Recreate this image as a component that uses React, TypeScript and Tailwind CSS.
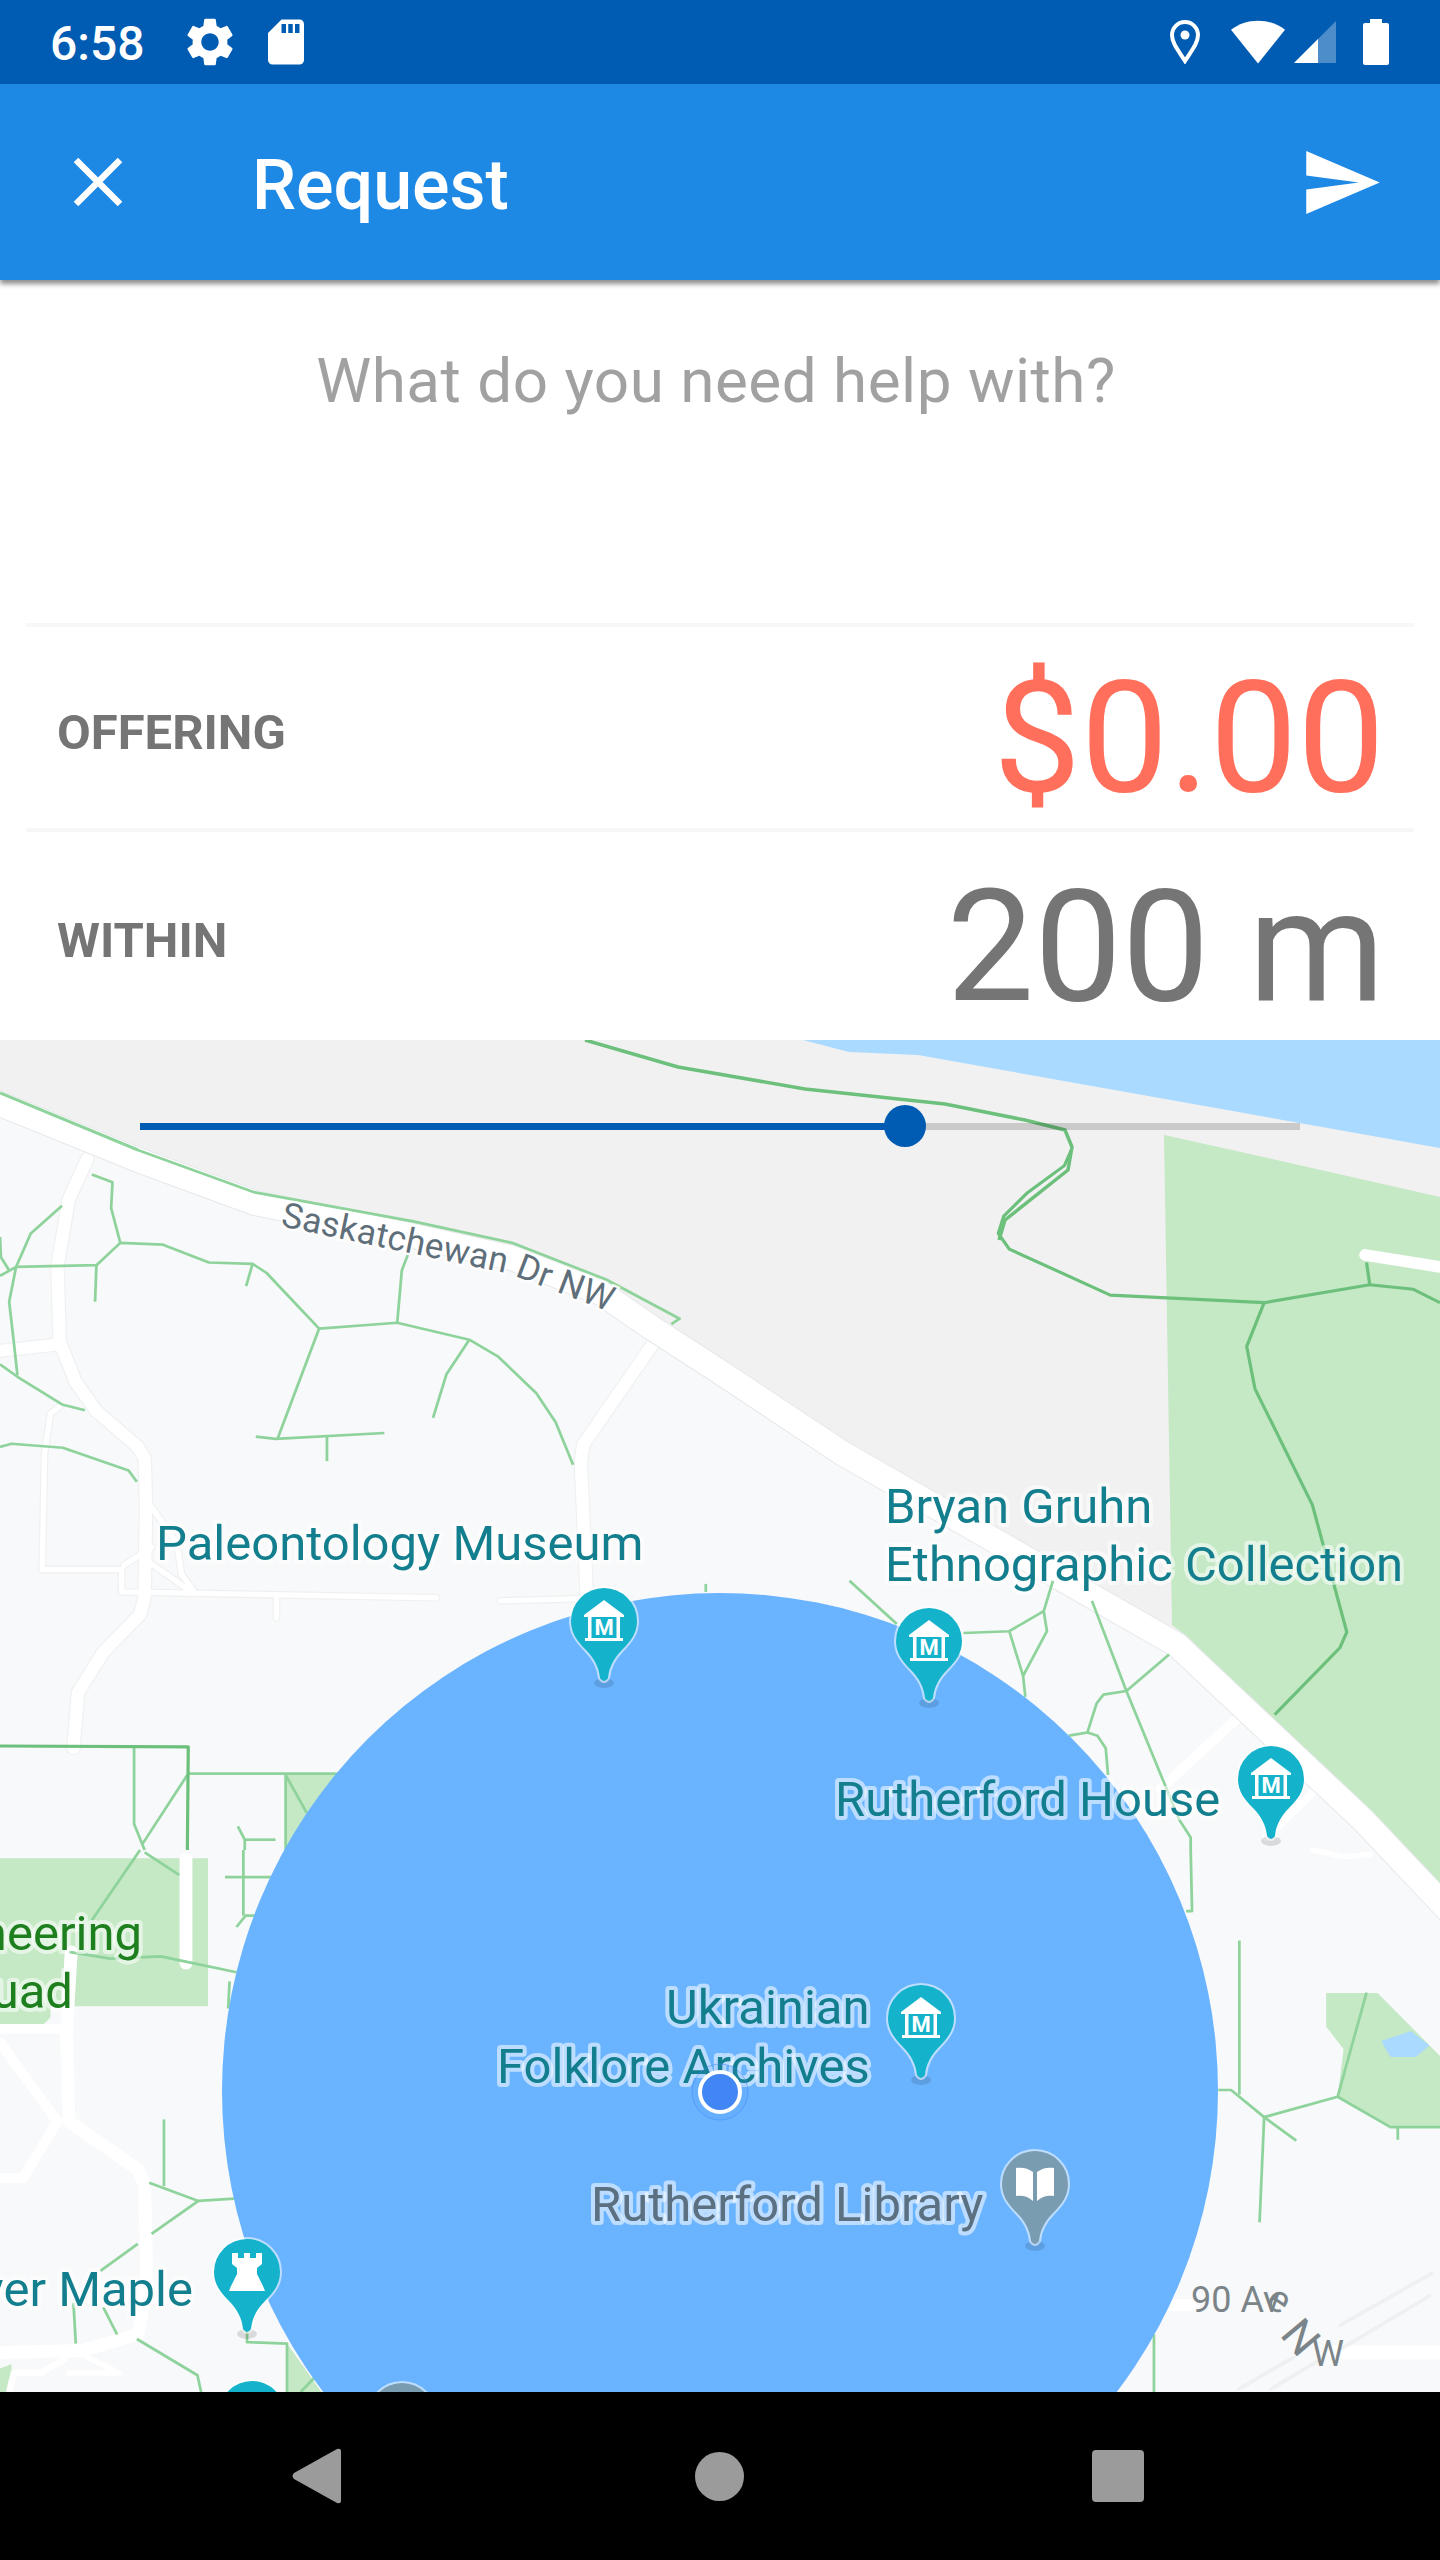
import { useState } from "react";

const Z3 = "translate(0 1150) scale(0.4592 0.4464)";
const Z4 = "translate(720 1150) scale(0.4592 0.4464)";
const Z5 = "translate(0 1850) scale(0.4592 0.4528)";
const Z6 = "translate(720 1850) scale(0.4592 0.4528)";

const PIN = "M-33 0A33 33 0 1 1 33 0C33 12 27 20 18 29C10 37 5 46 4 57Q0 63 -4 57C-5 46 -10 37 -18 29C-27 20 -33 12 -33 0Z";
const MAIN_ROAD = "M-10 1100L138 1160L255 1203L409 1235L512 1258L601 1293L652 1328L720 1372L842 1453L1177 1645L1363 1820L1450 1912";

function Pin({ x, y, color = "#14b3cb", children }: { x: number; y: number; color?: string; children?: React.ReactNode }) {
  return (
    <g transform={`translate(${x} ${y})`}>
      <ellipse cx="0" cy="62" rx="10" ry="5" fill="#000" opacity="0.12" />
      <path d={PIN} fill={color} stroke="#fff" strokeOpacity="0.55" strokeWidth="4" paintOrder="stroke" />
      {children}
    </g>
  );
}

function Museum() {
  return (
    <g fill="#fff">
      <path d="M0 -21L20 -6V-4H-20V-6Z" />
      <rect x="-16" y="-4" width="3.5" height="21" />
      <rect x="12.5" y="-4" width="3.5" height="21" />
      <rect x="-19" y="17" width="38" height="3" />
      <text x="0" y="14" textAnchor="middle" fontSize="22" fontWeight="700">M</text>
    </g>
  );
}

function Rook() {
  return <path fill="#fff" d="M-15 -19V-8L-10 -4V2L-16 14L-18 19H18L16 14L10 2V-4L15 -8V-19H9V-14H3V-19H-3V-14H-9V-19Z" />;
}

function Book() {
  return (
    <g fill="#fff">
      <path d="M-2 -12C-7 -16 -13 -17 -19 -16V12C-13 11 -7 12 -2 17Z" />
      <path d="M2 -12C7 -16 13 -17 19 -16V12C13 11 7 12 2 17Z" />
    </g>
  );
}

function Label({ x, y, children, fill = "#137f8e", anchor = "start", size = 49 }: { x: number; y: number; children: string; fill?: string; anchor?: "start" | "end"; size?: number }) {
  return (
    <text x={x} y={y} fill={fill} fontSize={size} textAnchor={anchor} stroke="#fff" strokeOpacity="0.55" strokeWidth="8" strokeLinejoin="round" paintOrder="stroke">
      {children}
    </text>
  );
}

function MapDrawing() {
  return (
    <svg viewBox="0 1040 1440 1352" className="block w-full h-full" fill="none">
      <rect x="0" y="1040" width="1440" height="1352" fill="#f8f9fa" />
      <path d="M0 1040H1440V1905L1363 1820L1177 1645L842 1453L720 1372L601 1293L409 1235L255 1203L138 1160L0 1105Z" fill="#f1f1f1" />
      <path d="M803 1040L849 1052L918 1055L1440 1148V1040Z" fill="#aadaff" />
      <path d="M1164 1135L1232 1150L1440 1197V1905L1363 1820L1188 1637L1172 1625Z" fill="#c5e8c5" />

      {/* parks lower down */}
      <g transform={Z5} fill="#c5e8c5">
        <path d="M0 18H453V345H110V370L90 390H0Z" />
        <path d="M625 1090L700 1197H625Z" />
        <path d="M0 1145L25 1135V1197H0Z" />
      </g>
      <g transform={Z3} fill="#c5e8c5">
        <path d="M622 1397H735L622 1568Z" />
      </g>
      <g transform={Z6}>
        <path d="M1320 316H1432L1568 455V612H1460L1345 545L1358 440L1320 390Z" fill="#c5e8c5" />
        <path d="M1440 422L1505 400L1545 432L1515 457H1460Z" fill="#aadaff" />
      </g>

      {/* minor roads */}
      <g stroke="#eef0f1" strokeLinecap="round" strokeLinejoin="round">
        <g transform={Z3} strokeWidth="32">
          <path d="M190 20L150 110L125 260L130 430L165 520L210 585L300 665L315 690L318 800L315 1000L305 1040L225 1125L170 1215L160 1340" />
          <path d="M0 450L130 435" />
          <path d="M1425 430L1270 660L1265 700L1278 1000" />
        </g>
        <g transform={Z3} strokeWidth="17">
          <path d="M130 575L110 590L97 680L92 940L265 940L265 990L950 1003" />
          <path d="M1090 1010L1270 1005" />
          <path d="M602 1005V1048" />
          <path d="M330 800L385 880L395 950L420 985" />
          <path d="M270 930L330 890" />
          <path d="M320 920L410 985" />
        </g>
      </g>
      <g stroke="#fff" strokeLinecap="round" strokeLinejoin="round">
        <g transform={Z3}>
          <g strokeWidth="27">
            <path d="M190 20L150 110L125 260L130 430L165 520L210 585L300 665L315 690L318 800L315 1000L305 1040L225 1125L170 1215L160 1340" />
            <path d="M0 450L130 435" />
            <path d="M1425 430L1270 660L1265 700L1278 1000" />
          </g>
          <g strokeWidth="12">
            <path d="M130 575L110 590L97 680L92 940L265 940L265 990L950 1003" />
            <path d="M1090 1010L1270 1005" />
            <path d="M602 1005V1048" />
            <path d="M330 800L385 880L395 950L420 985" />
            <path d="M270 930L330 890" />
            <path d="M320 920L410 985" />
          </g>
        </g>
        <g transform={Z4}>
          <path d="M1405 235L1568 262" strokeWidth="26" />
          <path d="M1130 1270L960 1430" strokeWidth="22" />
          <path d="M1300 1430L1265 1465L1190 1540" strokeWidth="18" />
        </g>
        <g transform={Z5}>
          <path d="M405 20V250" strokeWidth="28" />
          <path d="M155 225L145 400L150 600L300 705L315 740L320 960L300 1070L180 1105L0 1110" strokeWidth="28" />
          <path d="M0 425L125 600L50 725H0" strokeWidth="22" />
          <path d="M0 395H130" strokeWidth="22" />
          <path d="M150 1155H260L190 1120" strokeWidth="12" />
          <path d="M20 1197L30 1155H90L140 1125" strokeWidth="14" />
        </g>
        <g transform={Z6}>
          <path d="M980 1005H1025" strokeWidth="26" />
          <path d="M1340 1110H1568" strokeWidth="30" />
          <path d="M1290 0L1360 15L1415 10" strokeWidth="12" />
        </g>
      </g>
      <g transform={Z6} stroke="#eef0f1" strokeWidth="8" strokeLinecap="round">
        <path d="M1350 1050L1550 935" />
        <path d="M1355 1100L1545 985" />
        <path d="M1130 1190L1250 1120" />
        <path d="M1200 1190L1300 1130" />
      </g>

      {/* main road */}
      <path d={MAIN_ROAD} stroke="#e6e8ea" strokeWidth="26" strokeLinejoin="round" />
      <path d={MAIN_ROAD} stroke="#fff" strokeWidth="24" strokeLinejoin="round" />

      {/* paths, light */}
      <g stroke="#8fd39c" strokeLinejoin="round">
        <path d="M0 1093L138 1150" strokeWidth="3" />
        <g transform={Z3} strokeWidth="6">
          <path d="M300 0L555 95L900 160L1115 208L1320 290L1480 378L1462 390" />
          <path d="M200 55L245 72L242 130L262 208" />
          <path d="M135 125L67 187L35 262L20 340L30 430L38 505" />
          <path d="M0 195L2 240L20 270" />
          <path d="M0 282L35 262L210 258L262 208L355 212L455 252L550 255L580 275L695 400L865 387L1022 425L1085 463L1168 545L1210 610L1248 705" />
          <path d="M210 258L207 340" />
          <path d="M550 255L536 305" />
          <path d="M695 400L605 645" />
          <path d="M557 642L600 647L837 634" />
          <path d="M712 642V697" />
          <path d="M888 235L875 270L865 387" />
          <path d="M1022 425L972 503L943 600" />
          <path d="M0 480L38 508L135 570L185 583" />
          <path d="M0 665L25 658L137 667L280 718L298 743" />
          <path d="M292 1337V1510L315 1568" />
          <path d="M408 1400L310 1555" />
          <path d="M410 1397H735" />
          <path d="M622 1397V1568" />
          <path d="M622 1400L668 1485" />
          <path d="M518 1515L533 1545V1568" />
          <path d="M533 1545H600" />
          <path d="M1537 972V990" />
        </g>
        <g transform={Z4} strokeWidth="6">
          <path d="M282 965L385 1062" />
          <path d="M530 1082L630 1078L705 1033L725 965" />
          <path d="M630 1078L660 1178L712 1078L705 1033" />
          <path d="M660 1178L665 1225" />
          <path d="M810 1010L885 1212L1000 1500L1025 1540V1568" />
          <path d="M885 1212L978 1130" />
          <path d="M885 1212L835 1220L820 1240L800 1305L760 1312" />
          <path d="M800 1305L822 1312L840 1340L845 1400" />
        </g>
        <g transform={Z5} strokeWidth="6">
          <path d="M305 0L200 155" />
          <path d="M315 5L390 55" />
          <path d="M150 225L240 240L350 235L420 250L515 270" />
          <path d="M515 170L535 145H590" />
          <path d="M530 0V145" />
          <path d="M490 60H590" />
          <path d="M500 290L497 350" />
          <path d="M357 595V742" />
          <path d="M325 735L432 775L510 770" />
          <path d="M432 775L330 848" />
          <path d="M300 870L218 930" />
          <path d="M160 1000L165 1090" />
          <path d="M225 1010L255 1070" />
          <path d="M298 1080L430 1160L438 1197" />
          <path d="M538 1060V1087L625 1090V1197" />
          <path d="M655 1197L685 1165" />
        </g>
        <g transform={Z6} strokeWidth="6">
          <path d="M1025 0L1028 135H1015" />
          <path d="M1131 200V540" />
          <path d="M1085 530H1113L1185 590L1255 642" />
          <path d="M1185 590L1345 545L1408 315" />
          <path d="M1345 545L1460 612H1568" />
          <path d="M1476 612V640" />
          <path d="M1185 590L1175 822" />
          <path d="M945 1070V1197" />
        </g>
      </g>
      {/* paths, dark */}
      <g stroke="#6cc07c" strokeLinejoin="round">
        <path d="M585 1040L678 1067L805 1089L945 1104L1025 1120L1065 1130L1072 1147L1068 1170L1005 1220L999 1240" strokeWidth="3.5" />
        <g transform={Z4} strokeWidth="7">
          <path d="M765 0L750 35L668 97L618 148L606 187L630 222L850 325L1185 342L1415 302L1510 312L1568 342" />
          <path d="M1408 252L1415 302" />
          <path d="M1185 342L1147 440L1165 535L1290 795L1365 1080L1350 1115L1208 1265" />
        </g>
        <g transform={Z3} strokeWidth="7">
          <path d="M0 1335L410 1337L408 1568" />
        </g>
      </g>

      {/* radius circle */}
      <circle cx="720" cy="2091" r="498" fill="#6ab4ff" />

      {/* street names */}
      <path id="sask" d="M280 1226L510 1274L625 1318" />
      <text fontSize="35" fill="#5f6f7a" stroke="#fff" strokeOpacity="0.8" strokeWidth="5" paintOrder="stroke" letterSpacing="0.3">
        <textPath href="#sask">Saskatchewan Dr NW</textPath>
      </text>
      <g fontSize="36" fill="#7b8589">
        <text x="1191" y="2312">90 Av</text>
        <text transform="translate(1264 2304) rotate(35)" fontSize="38">e</text>
        <text transform="translate(1279 2335) rotate(50)" fontSize="44">N</text>
        <text x="1312" y="2366">W</text>
      </g>

      {/* places */}
      <Label x={156} y={1560}>Paleontology Museum</Label>
      <Label x={885} y={1523}>Bryan Gruhn</Label>
      <Label x={885} y={1581}>Ethnographic Collection</Label>
      <Label x={835} y={1816}>Rutherford House</Label>
      <Label x={666} y={2024}>Ukrainian</Label>
      <Label x={497} y={2083}>Folklore Archives</Label>
      <Label x={591} y={2221} fill="#5b7080">Rutherford Library</Label>
      <Label x={142} y={1950} anchor="end" fill="#1e7f1e">Engineering</Label>
      <Label x={73} y={2008} anchor="end" fill="#1e7f1e">Quad</Label>
      <Label x={193} y={2306} anchor="end">Silver Maple</Label>

      <Pin x={604} y={1621}><Museum /></Pin>
      <Pin x={929} y={1641}><Museum /></Pin>
      <Pin x={1271} y={1779}><Museum /></Pin>
      <Pin x={921} y={2018}><Museum /></Pin>
      <Pin x={1035} y={2184} color="#7a9cb0"><Book /></Pin>
      <Pin x={247} y={2272}><Rook /></Pin>
      <Pin x={252} y={2414} />
      <Pin x={402} y={2416} color="#7a9cb0" />

      {/* my location */}
      <circle cx="720" cy="2092" r="28" fill="#4285f4" fillOpacity="0.1" stroke="#4285f4" strokeOpacity="0.5" strokeWidth="1" />
      <circle cx="720" cy="2092" r="20" fill="#4285f4" stroke="#fff" strokeWidth="4" />
    </svg>
  );
}

function StatusBar() {
  return (
    <div className="h-[84px] bg-[#005cb2] flex items-center justify-between pl-[50px] pr-[51px] text-white">
      <div className="flex items-center">
        <span className="text-[48px] leading-none font-medium w-[131px] pt-[3px]">6:58</span>
        <svg viewBox="0 0 24 24" className="w-[58px] h-[58px]" fill="#fff">
          <path d="M19.14 12.94c.04-.3.06-.61.06-.94 0-.32-.02-.64-.07-.94l2.03-1.58c.18-.14.23-.41.12-.61l-1.92-3.32c-.12-.22-.37-.29-.59-.22l-2.39.96c-.5-.38-1.03-.7-1.62-.94l-.36-2.54c-.04-.24-.24-.41-.48-.41h-3.84c-.24 0-.43.17-.47.41l-.36 2.54c-.59.24-1.13.57-1.62.94l-2.39-.96c-.22-.08-.47 0-.59.22L2.74 8.87c-.12.21-.08.47.12.61l2.03 1.58c-.05.3-.09.63-.09.94s.02.64.07.94l-2.03 1.58c-.18.14-.23.41-.12.61l1.92 3.32c.12.22.37.29.59.22l2.39-.96c.5.38 1.03.7 1.62.94l.36 2.54c.05.24.24.41.48.41h3.84c.24 0 .44-.17.47-.41l.36-2.54c.59-.24 1.13-.56 1.62-.94l2.39.96c.22.08.47 0 .59-.22l1.92-3.32c.12-.22.07-.47-.12-.61l-2.01-1.58zM12 15.6c-1.98 0-3.6-1.62-3.6-3.6s1.62-3.6 3.6-3.6 3.6 1.62 3.6 3.6-1.62 3.6-3.6 3.6z" />
        </svg>
        <svg viewBox="0 0 24 24" className="w-[54px] h-[54px] ml-[20px]" fill="#fff">
          <path d="M18 2h-8L4 8v12c0 1.1.9 2 2 2h12c1.1 0 2-.9 2-2V4c0-1.1-.9-2-2-2zm-6 6h-2V4h2v4zm3 0h-2V4h2v4zm3 0h-2V4h2v4z" />
        </svg>
      </div>
      <div className="flex items-center">
        <svg viewBox="0 0 32 44" className="w-[32px] h-[44px]" fill="none">
          <path d="M16 41C9 30 3 23 3 15a13 13 0 0 1 26 0c0 8-6 15-13 26z" stroke="#fff" strokeWidth="4" />
          <circle cx="16" cy="15" r="4.5" fill="#fff" />
        </svg>
        <svg viewBox="0 0 24 24" className="w-[54px] h-[54px] ml-[30px]" fill="#fff">
          <path d="M12 21.5L0 6.5C3.4 3.9 7.5 2.5 12 2.5s8.6 1.4 12 4z" />
        </svg>
        <svg viewBox="0 0 42 42" className="w-[42px] h-[42px] ml-[9px]">
          <path d="M0 42L42 0V42Z" fill="#fff" fillOpacity="0.3" />
          <path d="M0 42L24 18V42Z" fill="#fff" />
        </svg>
        <svg viewBox="0 0 26 46" className="w-[26px] h-[46px] ml-[27px]" fill="#fff">
          <path d="M7 0H19V4H24A2 2 0 0 1 26 6V44A2 2 0 0 1 24 46H2A2 2 0 0 1 0 44V6A2 2 0 0 1 2 4H7Z" />
        </svg>
      </div>
    </div>
  );
}

function Row({ label, value, color }: { label: string; value: string; color: string }) {
  return (
    <div className="flex-1 flex items-center justify-between pl-[57px] pr-[55px] pt-[10px] text-[#757575]">
      <span className="text-[49px] font-bold">{label}</span>
      <span className={`text-[156px] leading-none pt-[11px] ${color}`}>{value}</span>
    </div>
  );
}

export default function App() {
  const [amount] = useState("$0.00");

  return (
    <div className="w-[1440px] h-[2560px] flex flex-col bg-white overflow-hidden font-['Roboto',sans-serif]">
      <StatusBar />
      <div className="relative z-10 h-[196px] bg-[#1e88e5] flex items-center text-white shadow-[0_4px_5px_rgba(0,0,0,0.45)]">
        <svg viewBox="0 0 50 50" className="w-[50px] h-[50px] ml-[73px]" stroke="#fff" strokeWidth="6.5">
          <path d="M3 3L47 47M47 3L3 47" />
        </svg>
        <span className="text-[70px] font-medium ml-[129px] pt-[6px]">Request</span>
        <svg viewBox="0 0 21 18" className="w-[74px] h-[63px] ml-auto mr-[60px]" fill="#fff">
          <path d="M0 18L21 9L0 0L0 7L15 9L0 11Z" />
        </svg>
      </div>

      <div className="h-[343px] flex justify-center pt-[69px] pr-[8px]">
        <span className="text-[62px] leading-[64px] tracking-[0.5px] text-[#a1a1a1]">What do you need help with?</span>
      </div>

      <div className="mx-[26px] h-[4px] bg-[#f7f7f7]" />
      <div className="h-[201px] flex">
        <Row label="OFFERING" value={amount} color="text-[#ff6f5b]" />
      </div>
      <div className="mx-[26px] h-[4px] bg-[#f7f7f7]" />
      <div className="h-[208px] flex">
        <Row label="WITHIN" value="200 m" color="text-[#757575]" />
      </div>

      <div className="relative flex-1 overflow-hidden">
        <MapDrawing />
        <div className="absolute left-[140px] top-[83px] w-[1160px] h-[7px] flex">
          <div className="w-[765px] bg-[#005cb2]" />
          <div className="flex-1 bg-black/[0.16]" />
          <div className="absolute left-[744px] top-[-18px] w-[42px] h-[42px] rounded-full bg-[#005cb2]" />
        </div>
      </div>

      <div className="h-[168px] bg-black flex items-center justify-center pr-[4px]">
        <svg viewBox="0 0 49 56" className="w-[49px] h-[56px]" fill="#9b9b9b">
          <path d="M2 25L45 1Q49 0 49 3V53Q49 56 45 55L2 31Q-1 28 2 25Z" />
        </svg>
        <div className="w-[49px] h-[49px] ml-[354px] rounded-full bg-[#9b9b9b]" />
        <div className="w-[52px] h-[52px] ml-[348px] rounded-[4px] bg-[#9b9b9b]" />
      </div>
    </div>
  );
}
